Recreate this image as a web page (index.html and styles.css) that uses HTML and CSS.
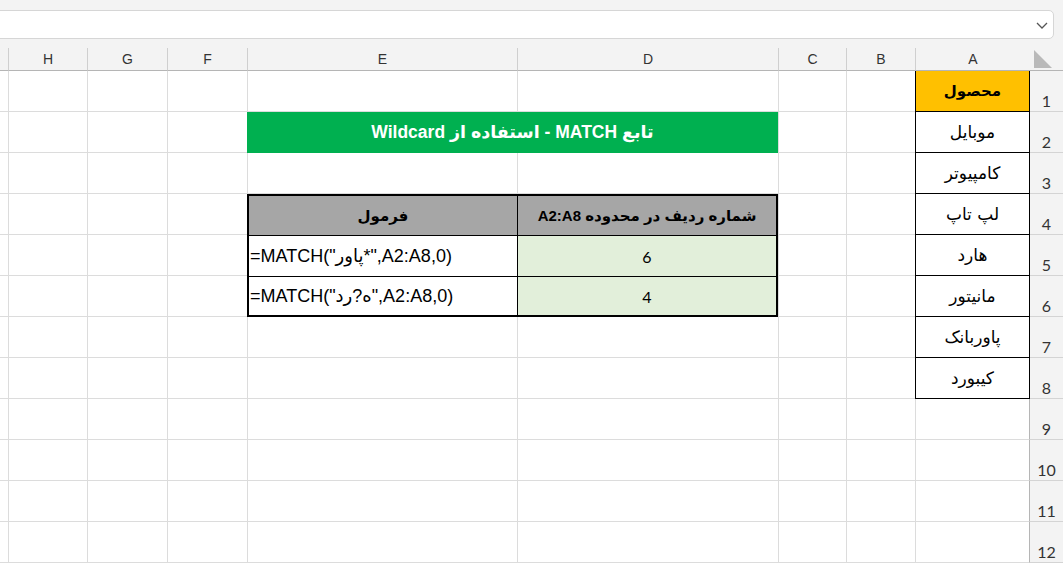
FILE: index.html
```html
<!DOCTYPE html>
<html lang="fa">
<head>
<meta charset="utf-8">
<title>MATCH Wildcard</title>
<link rel="stylesheet" href="styles.css">
</head>
<body>
<div class="top">
  <div class="fbar">
    <svg class="chev" width="14" height="10" viewBox="0 0 14 10"><polyline points="2,3 7,8 12,3" fill="none" stroke="#555" stroke-width="1.3"/></svg>
  </div>
</div>
<div class="sheet" dir="rtl">
  <!-- header row -->
  <div class="corner"><svg width="33" height="22" viewBox="0 0 33 22"><polygon points="4,2 4,20 22,20" fill="#b9b9b9"/></svg></div>
  <div class="ch">A</div><div class="ch">B</div><div class="ch">C</div><div class="ch">D</div><div class="ch">E</div><div class="ch">F</div><div class="ch">G</div><div class="ch">H</div><div class="ch p"></div>

  <!-- row 1 -->
  <div class="rh">1</div>
  <div class="c ca a head">محصول</div>
  <div class="c"></div><div class="c"></div><div class="c"></div><div class="c"></div><div class="c"></div><div class="c"></div><div class="c"></div><div class="c p"></div>

  <!-- row 2 -->
  <div class="rh">2</div>
  <div class="c ca a">موبایل</div>
  <div class="c"></div><div class="c"></div>
  <div class="title">تابع MATCH - استفاده از Wildcard</div>
  <div class="c"></div><div class="c"></div><div class="c"></div><div class="c p"></div>

  <!-- row 3 -->
  <div class="rh">3</div>
  <div class="c ca a">کامپیوتر</div>
  <div class="c"></div><div class="c"></div><div class="c"></div><div class="c"></div><div class="c"></div><div class="c"></div><div class="c"></div><div class="c p"></div>

  <!-- row 4 -->
  <div class="rh">4</div>
  <div class="c ca a">لپ تاپ</div>
  <div class="c"></div><div class="c"></div>
  <div class="tbl">
    <div class="th td">شماره ردیف در محدوده A2:A8</div>
    <div class="th">فرمول</div>
    <div class="tn td">6</div>
    <div class="tf" dir="ltr">=MATCH("پاور*",A2:A8,0)</div>
    <div class="tn td">4</div>
    <div class="tf" dir="ltr">=MATCH("ه?رد",A2:A8,0)</div>
  </div>
  <div class="c"></div><div class="c"></div><div class="c"></div><div class="c p"></div>

  <!-- row 5 -->
  <div class="rh">5</div>
  <div class="c ca a">هارد</div>
  <div class="c"></div><div class="c"></div>
  <div class="c"></div><div class="c"></div><div class="c"></div><div class="c p"></div>

  <!-- row 6 -->
  <div class="rh">6</div>
  <div class="c ca a">مانیتور</div>
  <div class="c"></div><div class="c"></div>
  <div class="c"></div><div class="c"></div><div class="c"></div><div class="c p"></div>

  <!-- row 7 -->
  <div class="rh">7</div>
  <div class="c ca a">پاوربانک</div>
  <div class="c"></div><div class="c"></div><div class="c"></div><div class="c"></div><div class="c"></div><div class="c"></div><div class="c"></div><div class="c p"></div>

  <!-- row 8 -->
  <div class="rh">8</div>
  <div class="c ca a">کیبورد</div>
  <div class="c"></div><div class="c"></div><div class="c"></div><div class="c"></div><div class="c"></div><div class="c"></div><div class="c"></div><div class="c p"></div>

  <!-- row 9 -->
  <div class="rh">9</div>
  <div class="c ca"></div>
  <div class="c"></div><div class="c"></div><div class="c"></div><div class="c"></div><div class="c"></div><div class="c"></div><div class="c"></div><div class="c p"></div>

  <!-- row 10 -->
  <div class="rh">10</div>
  <div class="c ca"></div>
  <div class="c"></div><div class="c"></div><div class="c"></div><div class="c"></div><div class="c"></div><div class="c"></div><div class="c"></div><div class="c p"></div>

  <!-- row 11 -->
  <div class="rh">11</div>
  <div class="c ca"></div>
  <div class="c"></div><div class="c"></div><div class="c"></div><div class="c"></div><div class="c"></div><div class="c"></div><div class="c"></div><div class="c p"></div>

  <!-- row 12 -->
  <div class="rh">12</div>
  <div class="c ca"></div>
  <div class="c"></div><div class="c"></div><div class="c"></div><div class="c"></div><div class="c"></div><div class="c"></div><div class="c"></div><div class="c p"></div>
</div>
</body>
</html>
```

FILE: styles.css
```css
* { box-sizing: border-box; }
html, body { margin: 0; padding: 0; height: 100%; overflow: hidden; background: #fff; }
body { font-family: "Liberation Sans", "DejaVu Sans", sans-serif; color: #000; }

.top {
  height: 48px;
  background: #f3f3f3;
  padding-top: 10px;
  display: flex;
}
.fbar {
  flex: 1;
  height: 29px;
  margin: 0 9px 0 -8px;
  background: #fff;
  border: 1px solid #d6d6d6;
  border-radius: 5px;
  display: flex;
  align-items: center;
  justify-content: flex-end;
  padding-right: 4px;
}
.chev { display: block; }

.sheet {
  display: grid;
  direction: rtl;
  grid-template-columns: 33px 115px 69px 68px 261px 270px 80px 80px 79px 8px;
  grid-template-rows: 23px;
  grid-auto-rows: 41px;
}

.corner {
  background: #f3f3f3;
  border-bottom: 1px solid #b5b5b5;
}
.corner svg { display: block; }

.ch {
  background: #f3f3f3;
  border-left: 1px solid #cfcfcf;
  border-bottom: 1px solid #b5b5b5;
  display: flex;
  align-items: center;
  justify-content: center;
  font-size: 14px;
  color: #333;
}

.rh {
  background: #f3f3f3;
  border-bottom: 1px solid #d4d4d4;
  display: flex;
  align-items: flex-end;
  justify-content: center;
  padding-bottom: 1px;
  font-family: Lato, "Liberation Sans", sans-serif;
  font-size: 16px;
  color: #333;
}

.c {
  border-left: 1px solid #dcdcdc;
  border-bottom: 1px solid #dcdcdc;
  display: flex;
  align-items: center;
  justify-content: center;
  font-family: "DejaVu Sans", sans-serif;
  font-size: 17px;
}
.p { border-left: none; }
.ca { border-right: 1px solid #b5b5b5; }
.a {
  border-left: 1px solid #000;
  border-right: 1px solid #000;
  border-bottom: 1px solid #000;
}
.head { background: #ffc000; font-weight: bold; font-size: 15px; }

.title {
  grid-column: span 2;
  background: #00b050;
  color: #fff;
  font-weight: bold;
  font-size: 17.5px;
  display: flex;
  align-items: center;
  justify-content: center;
}

.tbl {
  grid-column: span 2;
  grid-row: span 3;
  border: 2px solid #000;
  display: grid;
  grid-template-columns: 259px 1fr;
  grid-template-rows: 40px 41px 1fr;
}
.tbl > div {
  display: flex;
  align-items: center;
  justify-content: center;
  border-bottom: 1px solid #000;
  font-size: 16px;
}
.tbl > div:nth-last-child(-n+2) { border-bottom: none; }
.td { border-left: 1px solid #000; }
.th { background: #a6a6a6; font-weight: bold; font-size: 15px !important; }
.tn { background: #e2efda; font-family: Lato, "Liberation Sans", sans-serif; font-size: 16px !important; }
.tf {
  justify-content: flex-start !important;
  padding-left: 1px;
  background: #fff;
  font-size: 18px !important;
}
```
